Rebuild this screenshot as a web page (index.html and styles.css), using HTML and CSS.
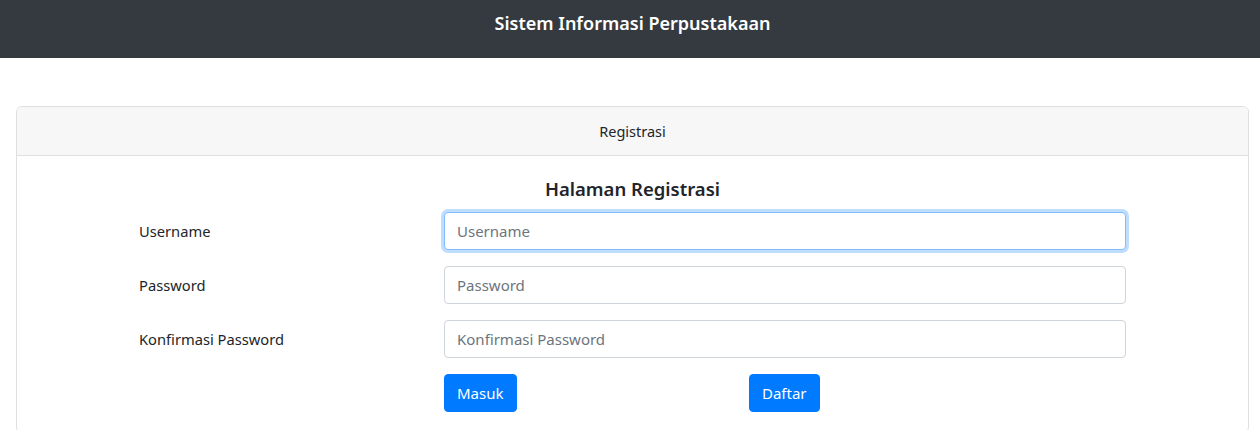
FILE: index.html
```html
<!DOCTYPE html>
<html lang="id">
<head>
<meta charset="utf-8">
<title>Sistem Informasi Perpustakaan</title>
<link rel="stylesheet" href="styles.css">
</head>
<body>
<header class="navbar">
  <span class="brand">Sistem Informasi Perpustakaan</span>
</header>
<main class="container">
  <section class="card">
    <div class="card-header">Registrasi</div>
    <div class="card-body">
      <form class="form">
        <h5 class="title">Halaman Registrasi</h5>
        <div class="row">
          <label class="label" for="u">Username</label>
          <input class="input focus" id="u" type="text" placeholder="Username">
        </div>
        <div class="row">
          <label class="label" for="p">Password</label>
          <input class="input" id="p" type="password" placeholder="Password">
        </div>
        <div class="row">
          <label class="label" for="k">Konfirmasi Password</label>
          <input class="input" id="k" type="password" placeholder="Konfirmasi Password">
        </div>
        <div class="row buttons">
          <span></span>
          <div class="btn-group">
            <button type="button" class="btn">Masuk</button>
            <button type="button" class="btn">Daftar</button>
          </div>
        </div>
      </form>
    </div>
  </section>
</main>
</body>
</html>
```
FILE: styles.css
```css
* { box-sizing: border-box; }
html, body { margin: 0; padding: 0; background: #fff; }
body {
  font-family: "Noto Sans", "Open Sans", sans-serif;
  font-size: 15px;
  color: #212529;
  height: 430px;
  overflow: hidden;
}
.navbar {
  height: 58px;
  background: #343a40;
  display: flex;
  align-items: center;
  justify-content: center;
}
.brand {
  color: #fff;
  font-size: 18px;
  font-weight: 600;
  margin-top: -12px;
  margin-left: 5px;
}
.container {
  padding: 48px 11px 0 16px;
}
.card {
  border: 1px solid #dfdfdf;
  border-radius: 6px;
  background: #fff;
}
.card-header {
  height: 49px;
  background: #f7f7f7;
  border-bottom: 1px solid #dfdfdf;
  border-radius: 6px 6px 0 0;
  display: flex;
  align-items: center;
  justify-content: center;
  font-size: 14.5px;
  color: #212529;
}
.card-body {
  padding: 20px 0 20px;
}
.form {
  width: 987px;
  margin-left: 122px;
}
.title {
  margin: 0 0 10px;
  text-align: center;
  font-size: 18.5px;
  font-weight: 600;
  line-height: 26px;
  color: #212529;
}
.row {
  display: grid;
  grid-template-columns: 305px 682px;
  align-items: center;
  margin-bottom: 16px;
}
.row.buttons { margin-bottom: 0; }
.label {
  font-size: 14.7px;
  line-height: 38px;
  color: #212529;
}
.input {
  height: 38px;
  width: 100%;
  border: 1px solid #ced4da;
  border-radius: 4px;
  padding: 6px 12px;
  font-family: inherit;
  font-size: 15px;
  color: #495057;
  background: #fff;
  outline: none;
}
.input::placeholder { color: #6c757d; }
.input.focus {
  border-color: #80bdff;
  box-shadow: 0 0 0 3px rgba(0, 123, 255, 0.25);
}
.btn-group {
  display: grid;
  grid-template-columns: 305px auto;
  justify-items: start;
}
.btn {
  height: 38px;
  padding: 0 12px;
  background: #007bff;
  border: 1px solid #007bff;
  border-radius: 4px;
  color: #fff;
  font-family: inherit;
  font-size: 15px;
}
```
